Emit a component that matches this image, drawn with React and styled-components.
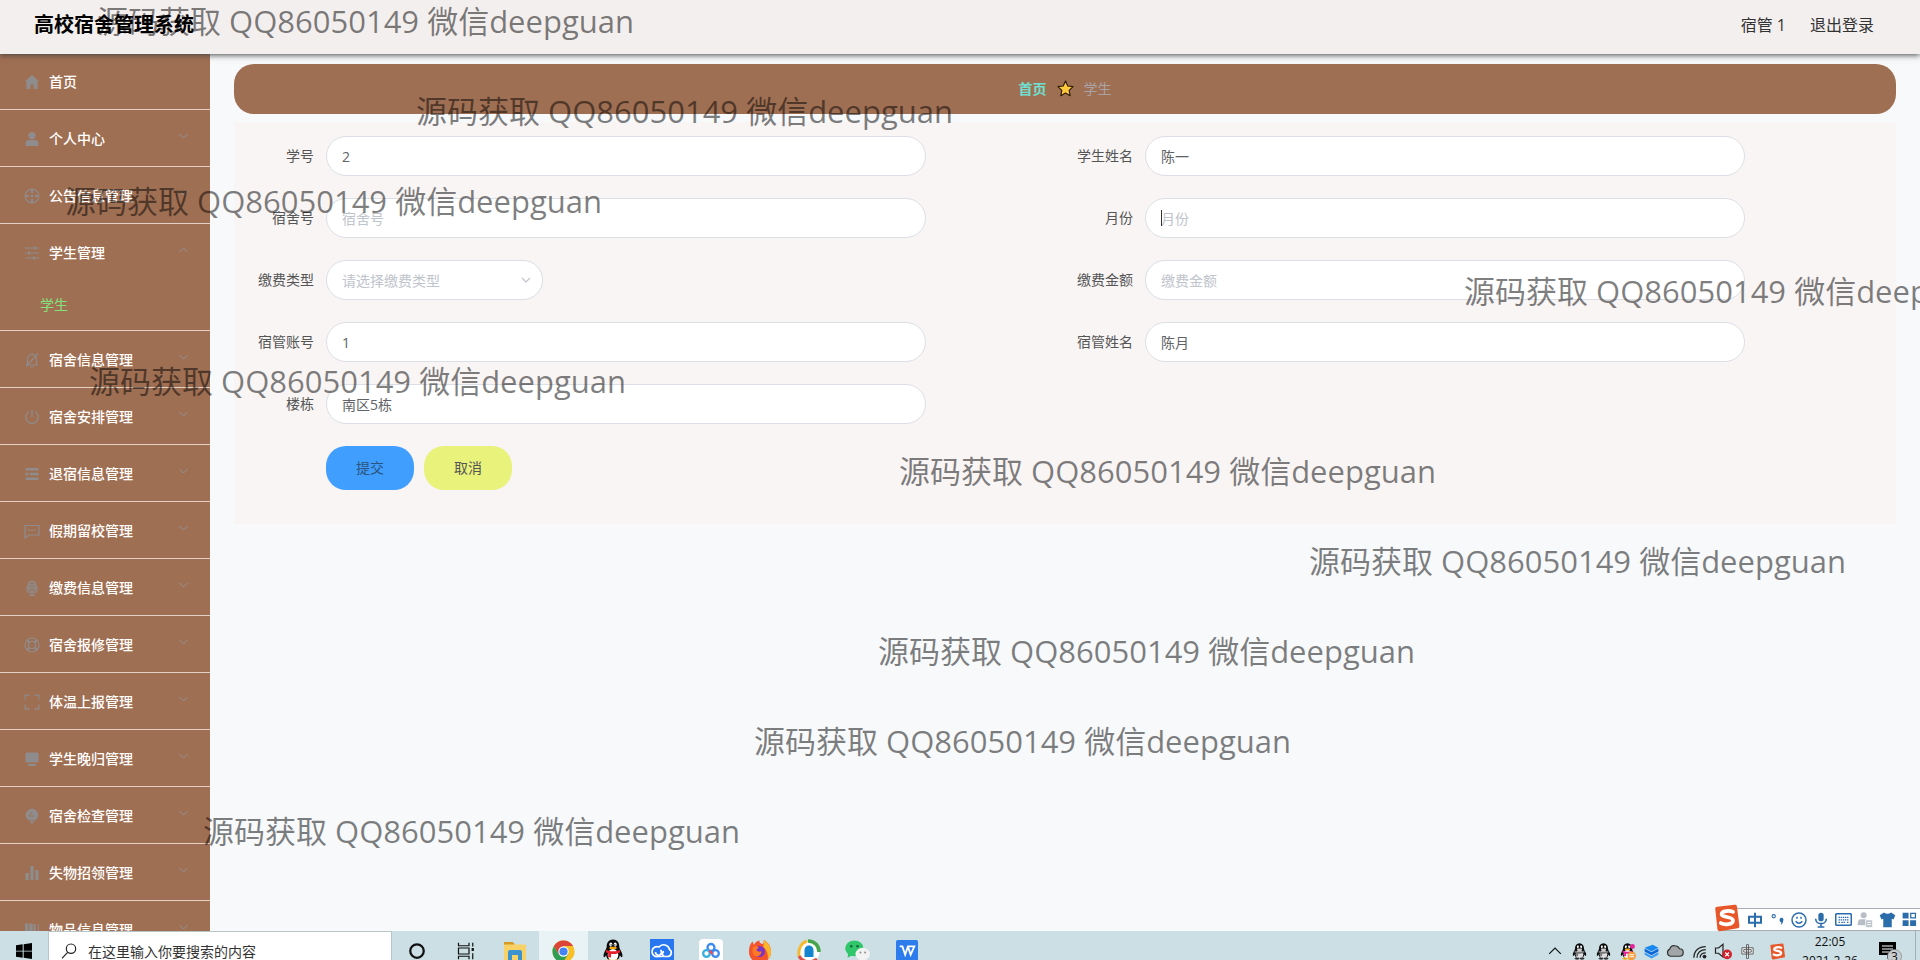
import React from "react";
import styled, { createGlobalStyle, css } from "styled-components";

const GlobalStyle = createGlobalStyle`
  *, *::before, *::after { box-sizing: border-box; }
  body {
    margin: 0;
    font-family: "Open Sans", "Noto Sans CJK SC", sans-serif;
    font-size: 14px;
    color: #606266;
    background: #f7f9fb;
  }
  ul { list-style: none; margin: 0; padding: 0; }
  button, input, select { font: inherit; color: inherit; }
  a { text-decoration: none; color: inherit; }
`;

const Screen = styled.div`
  position: relative;
  display: flex;
  flex-direction: column;
  height: 100vh;
  overflow: hidden;
`;

const Header = styled.header`
  position: relative;
  z-index: 2;
  flex: none;
  display: flex;
  align-items: center;
  justify-content: space-between;
  height: 54px;
  padding: 0 46px 4px 34px;
  background: #f4efef;
  box-shadow: 0 1px 6px #444;
`;

const SiteTitle = styled.h1`
  margin: 0;
  font-size: 20px;
  line-height: 28px;
  color: #000;
`;

const HeaderActions = styled.div`
  display: flex;
  gap: 24px;
  font-size: 16px;
  line-height: 24px;
  color: #333;
`;

const PlainButton = styled.button`
  padding: 0;
  border: 0;
  background: none;
  cursor: pointer;
`;

const Body = styled.div`
  flex: 1;
  min-height: 0;
  display: flex;
`;

const Sidebar = styled.nav`
  flex: none;
  width: 210px;
  margin-top: -1px;
  overflow: hidden;
  background: #9f6f53;
`;

const MenuItem = styled.li`
  border-bottom: 1px solid #e5d0c4;
`;

const MenuLink = styled.a`
  display: flex;
  align-items: center;
  height: 56px;
  padding: 2px 22px 0 24px;
  gap: 9px;
  font-weight: 500;
  color: #fff;
`;

const MenuText = styled.span`
  flex: 1;
  line-height: 20px;
`;

const MenuIcon = styled.svg`
  flex: none;
  width: 16px;
  height: 16px;
  color: #8f8c8d;
`;

const Chevron = styled.svg`
  flex: none;
  width: 9px;
  height: 6px;
  margin-bottom: 6px;
  color: #909399;
`;

const SubLink = styled.a`
  display: flex;
  align-items: center;
  height: 50px;
  padding: 0 0 2px 40px;
  color: #83e27c;
`;

const Main = styled.main`
  flex: 1;
  min-width: 0;
  padding: 10px 24px;
`;

const Breadcrumb = styled.nav`
  display: flex;
  align-items: center;
  justify-content: center;
  gap: 10px;
  height: 50px;
  padding-bottom: 2px;
  border-radius: 20px;
  background: #9f6f53;
  color: #a9a3a5;
`;

const CrumbLink = styled.a`
  font-weight: 700;
  color: #6fe0d0;
`;

const Star = styled.svg`
  width: 17px;
  height: 17px;
`;

const FormCard = styled.form`
  display: grid;
  grid-template-columns: 1fr 1fr;
  row-gap: 22px;
  margin-top: 8px;
  padding: 14px 12px 34px;
  background: #f9f5f5;
`;

const Field = styled.div`
  display: flex;
  min-width: 0;
  ${(p) => p.$wide && css`grid-column: 1 / -1;`}
`;

const FieldLabel = styled.label`
  flex: none;
  width: 80px;
  padding-right: 12px;
  line-height: 40px;
  text-align: right;
  color: #555;
`;

const Control = styled.div`
  position: relative;
  flex: 0 1 ${(p) => (p.$narrow ? 217 : 600)}px;
  min-width: 0;
`;

const boxStyle = css`
  display: block;
  width: 100%;
  height: 40px;
  padding: 0 15px;
  border: 1px solid #dcdfe6;
  border-radius: 20px;
  outline: 0;
  background: #fff;
`;

const TextInput = styled.input`
  ${boxStyle}
  caret-color: transparent;
  &::placeholder { color: #c0c4cc; opacity: 1; }
`;

const Select = styled.select`
  ${boxStyle}
  appearance: none;
  color: #c0c4cc;
`;

const SelectArrow = styled.svg`
  position: absolute;
  right: 12px;
  top: 17px;
  width: 10px;
  height: 7px;
  color: #c0c4cc;
  pointer-events: none;
`;

const Caret = styled.span`
  position: absolute;
  left: 16px;
  top: 12px;
  width: 1px;
  height: 16px;
  background: #333;
`;

const FormButtons = styled.div`
  display: flex;
  gap: 10px;
  padding-left: 80px;
`;

const FormButton = styled.button`
  width: 88px;
  height: 44px;
  padding: 0 0 2px;
  border: 0;
  border-radius: 20px;
  background: ${(p) => (p.$primary ? "#409eff" : "#e9f27b")};
  color: ${(p) => (p.$primary ? "#2b5580" : "#555")};
  cursor: pointer;
`;

const WatermarkLayer = styled.div`
  position: absolute;
  inset: 0;
  z-index: 5;
  overflow: hidden;
  padding: 0;
  pointer-events: none;
`;

const Watermark = styled.div`
  height: 90px;
  padding-left: ${(p) => p.$indent}px;
  font-size: 31px;
  line-height: 42px;
  white-space: nowrap;
  color: rgba(0, 0, 0, 0.5);
`;

const Taskbar = styled.footer`
  position: relative;
  z-index: 6;
  flex: none;
  height: 29px;
  background: #cbdfe4;
`;

const TaskbarClip = styled.div`
  display: flex;
  justify-content: space-between;
  height: 100%;
  overflow: hidden;
`;

const TaskGroup = styled.div`
  display: flex;
  height: 40px;
`;

const StartButton = styled.button`
  display: grid;
  place-items: center;
  width: 48px;
  height: 40px;
  padding: 0;
  border: 0;
  background: none;
`;

const SearchBox = styled.label`
  display: flex;
  align-items: center;
  gap: 11px;
  width: 344px;
  height: 40px;
  padding-left: 12px;
  border: 1px solid #b9c4c8;
  background: #fff;
`;

const SearchInput = styled.input`
  flex: 1;
  min-width: 0;
  padding: 0;
  border: 0;
  outline: 0;
  background: none;
  &::placeholder { color: #333; opacity: 1; }
`;

const TaskButton = styled.button`
  display: grid;
  place-items: center;
  width: 49px;
  height: 40px;
  padding: 0;
  border: 0;
  background: ${(p) => (p.$active ? "#e9f2f4" : "none")};
`;

const Tray = styled.div`
  display: flex;
  align-items: center;
  height: 40px;
`;

const TrayButton = styled.button`
  display: grid;
  place-items: center;
  width: ${(p) => p.$width || 24}px;
  height: 40px;
  padding: 0;
  border: 0;
  background: none;
`;

const Clock = styled.div`
  width: 70px;
  font-size: 12px;
  line-height: 19px;
  text-align: center;
  color: #111;
`;

const DesktopEdge = styled.div`
  width: 5px;
  height: 40px;
  border-left: 1px solid #9fb0b5;
`;

const ImeBar = styled.div`
  position: absolute;
  right: 0;
  bottom: 29px;
  display: flex;
  align-items: center;
  height: 23px;
  padding-left: 24px;
  border: 1px solid #a9adb3;
  border-right: 0;
  background: #fff;
  color: #2b6cab;
`;

const ImeLogo = styled.svg`
  position: absolute;
  left: -8px;
  top: -6px;
  width: 30px;
  height: 30px;
`;

const ImeButton = styled(PlainButton)`
  display: grid;
  place-items: center;
  width: 22px;
  height: 22px;
  font-weight: 700;
  font-size: 14px;
  line-height: 22px;
`;

const line = { fill: "none", stroke: "currentColor", strokeWidth: 1.2 };

const icons = {
  home: <path fill="currentColor" d="M8 1 .8 7.6h1.7V15h4v-4.5h3V15h4V7.6h1.7z" />,
  user: <><circle cx="8" cy="4.6" r="3.6" fill="currentColor" /><path fill="currentColor" d="M1.5 15v-2.5C1.5 10 3.4 9 5.3 9h5.4c1.9 0 3.800 1 3.800 3.500V15z" /></>,
  film: <g {...line}><circle cx="8" cy="8" r="6.800" /><circle cx="8" cy="8" r=".8" /><path d="M8 1.500v3.500M8 11v3.500M1.500 8H5M11 8h3.500" strokeWidth="2" /></g>,
  sliders: <g {...line}><path d="M1 3h14M1 8h14M1 13h14M11 1v4M5 6v4M10 11v4" /></g>,
  bell: <g {...line}><path d="M2 13h12M3.500 13V7A4.500 4.500 0 0 1 8 2.500 4.500 4.500 0 0 1 12.500 7v6M8 1v1.500M6.500 15h3M14 1.500 2 14.500" /></g>,
  power: <g {...line}><path d="M5 2.500a6.300 6.300 0 1 0 6 0M8 1v7" /></g>,
  list: <path fill="currentColor" d="M1.500 2h13v2.400h-13zM1.500 6.800h3v2.400h-3zM6 6.800h8.500v2.400H6zM1.500 11.600h13V14h-13z" />,
  chat: <g {...line}><path d="M1 2.500h14v9.500H5l-4 3z" /><path d="M4.500 7.200h1.500M7.200 7.200h1.500M10 7.200h1.500" strokeWidth="1.600" /></g>,
  mic: <g {...line}><rect x="4.500" y="1" width="7" height="10.500" rx="3.500" fill="currentColor" fillOpacity=".4" /><path d="M3 6v3.500C3 12 5 13 8 13s5-1 5-3.500V6M8 13v2.500M5 15.300h6M5 5h6M5 8h6" /></g>,
  help: <g {...line}><circle cx="8" cy="8" r="7" /><circle cx="8" cy="8" r="3.500" /><path d="m3 3 2.500 2.500M13 3l-2.500 2.500M3 13l2.500-2.500M13 13l-2.500-2.500" strokeWidth="1.800" /></g>,
  full: <g {...line}><path d="M5.500 1.200H1.200v4.300M10.500 1.200h4.300v4.300M5.500 14.800H1.200v-4.300M10.500 14.800h4.300v-4.300" /></g>,
  screen: <path fill="currentColor" d="M3.200 1.500h9.600c1 0 1.700.7 1.700 1.700v6.600c0 1-.7 1.700-1.700 1.700H3.200c-1 0-1.700-.7-1.700-1.700V3.200c0-1 .7-1.700 1.700-1.700zM4 13h8v2H4z" />,
  bulb: <><path fill="currentColor" d="M8 .8a6.300 6.300 0 0 0-6.300 6.300c0 2.500 1.400 4.300 3.500 5.300h5.600c2.100-1 3.500-2.800 3.500-5.300A6.300 6.300 0 0 0 8 .8zM5.800 13.200h4.400L8.800 15.500H7.200z" /><path d="M8.200 3.500 5 8h5" fill="none" stroke="#9f6f53" strokeWidth=".9" /></>,
  bars: <path fill="currentColor" d="M1.500 8h3.200v7H1.500zM6.400 1h3.200v14H6.400zM11.300 5h3.200v10h-3.200z" />,
  books: <path fill="currentColor" d="M1 1.500h3.400V14H1zM5.200 1.500h3.400V14H5.200zM9.400 2h2.200v7.500l1.200-1.200 1.200 1.200V2h1V14H9.400z" />,
};

const menu = [
  { icon: "home", text: "首页", leaf: true },
  { icon: "user", text: "个人中心" },
  { icon: "film", text: "公告信息管理" },
  { icon: "sliders", text: "学生管理", children: ["学生"] },
  { icon: "bell", text: "宿舍信息管理" },
  { icon: "power", text: "宿舍安排管理" },
  { icon: "list", text: "退宿信息管理" },
  { icon: "chat", text: "假期留校管理" },
  { icon: "mic", text: "缴费信息管理" },
  { icon: "help", text: "宿舍报修管理" },
  { icon: "full", text: "体温上报管理" },
  { icon: "screen", text: "学生晚归管理" },
  { icon: "bulb", text: "宿舍检查管理" },
  { icon: "bars", text: "失物招领管理" },
  { icon: "books", text: "物品信息管理" },
];

const fields = [
  { id: "number", label: "学号", value: "2" },
  { id: "name", label: "学生姓名", value: "陈一" },
  { id: "dorm", label: "宿舍号" },
  { id: "month", label: "月份", focused: true },
  { id: "type", label: "缴费类型", select: "请选择缴费类型" },
  { id: "amount", label: "缴费金额" },
  { id: "keeper", label: "宿管账号", value: "1" },
  { id: "keeperName", label: "宿管姓名", value: "陈月" },
  { id: "building", label: "楼栋", value: "南区5栋", wide: true },
];

const watermarkIndents = [97, 416, 65, 1464, 89, 899, 1309, 878, 754, 203];

const Penguin = ({ size = 22, body = "#fff", scarf = "#e3202b", extra }) => (
  <svg width={size} height={size} viewBox="0 0 24 24" aria-hidden="true">
    <path d="M12 .5c-4 0-6.300 3-6.300 7 0 2-1 3-2.200 5.500-1.300 2.700-1.200 5-.4 5.200.7.100 1.400-1 2-2 .3 1.800 1 3.200 2.200 4.300h9.400c1.200-1.100 1.900-2.500 2.200-4.300.6 1 1.300 2.100 2 2 .8-.2.900-2.500-.4-5.200-1.200-2.500-2.200-3.500-2.200-5.500 0-4-2.300-7-6.300-7z" fill="#0b0b0d" />
    <ellipse cx="12" cy="16" rx="5.300" ry="6" fill={body} />
    <path d="M5.300 10.800c4 2 9.400 2 13.400 0l.6 2.400c-2 1.200-4 1.700-6.300 1.900H10v3.500l-2.800-.4v-4c-1-.3-1.800-.7-2.500-1.200z" fill={scarf} />
    <ellipse cx="9.800" cy="5.600" rx="1.500" ry="2.100" fill="#fff" />
    <ellipse cx="14.200" cy="5.600" rx="1.500" ry="2.100" fill="#fff" />
    <circle cx="10.200" cy="5.900" r=".7" /><circle cx="13.800" cy="5.900" r=".7" />
    <ellipse cx="12" cy="9" rx="3.800" ry="1.200" fill={body === "#fff" ? "#f5a800" : "#ccc"} />
    <ellipse cx="8.500" cy="22" rx="3.500" ry="1.600" fill={body === "#fff" ? "#f5a800" : "#333"} />
    <ellipse cx="15.500" cy="22" rx="3.500" ry="1.600" fill={body === "#fff" ? "#f5a800" : "#333"} />
    {extra}
  </svg>
);

const Sogou = () => (
  <g>
    <path d="M3.500 5.500C3.300 4 4 3.200 5.500 3L24 .8c1.500-.2 2.400.4 2.600 1.900l2.600 20.500c.2 1.500-.4 2.400-1.900 2.600L8.500 29c-1.500.2-2.400-.4-2.700-1.900z" fill="#e8572a" />
    <path d="M22.500 8.500c-3.500-1.700-12-1.600-12.300 2.300-.3 4 12.500 2.200 12.200 6.900-.3 4.400-8.700 5-13 2.700" fill="none" stroke="#fff" strokeWidth="4" strokeLinecap="round" />
  </g>
);

const Svg = ({ w = 24, h = w, box = "0 0 24 24", children }) => (
  <svg width={w} height={h} viewBox={box} aria-hidden="true">{children}</svg>
);

const tasks = [
  ["Cortana", <Svg w={18}><circle cx="12" cy="12" r="9" fill="none" stroke="#111" strokeWidth="3" /></Svg>],
  ["任务视图", <Svg w={18}><path d="M2 1v4h14V1M2 23v-4h14v4M2 8h14v8H2zM21 1v5M21 15v8" fill="none" stroke="#111" strokeWidth="1.600" /><path fill="#111" d="M19.500 8h3v4h-3z" /></Svg>],
  ["文件资源管理器", <Svg w={24}><path fill="#d49a24" d="M1 3h9l2 3H1z" /><path fill="#f8d267" d="M1 5.500h22V22H1z" /><path fill="#3b94cf" d="M5 13q0-2 2-2h10q2 0 2 2v10h-4v-7H9v7H5z" /></Svg>],
  ["Chrome", <Svg w={23}><circle cx="12" cy="12" r="11.500" fill="#f6c026" /><path fill="#dc4437" d="M2 6.300A11.500 11.500 0 0 1 22 6.300H12L7 15z" /><path fill="#2f9e55" d="M2 6.300A11.500 11.500 0 0 0 11.500 23.500L17 14.500 7 15z" /><circle cx="12" cy="12" r="5.400" fill="#fff" /><circle cx="12" cy="12" r="4.300" fill="#4384f3" /></Svg>, true],
  ["QQ", <Penguin size={24} />],
  ["云盘", <Svg w={24}><path fill="#2877f0" d="M0 0h24v24H0z" /><path d="M12.500 17.500H8A5 5 0 1 1 9 8a6 6 0 0 1 10.500 2.500A3.800 3.800 0 0 1 18 17.500h-3c-3 0-3.500-4-1-5M5.500 13a3 3 0 1 0 5-2" fill="none" stroke="#fff" strokeWidth="1.700" /></Svg>],
  ["百度网盘", <Svg w={24}><rect width="24" height="24" rx="4" fill="#fff" /><g fill="none" strokeWidth="2.300"><circle cx="12" cy="8.500" r="3.500" stroke="#3c8cf0" /><circle cx="7.500" cy="14.500" r="3.300" stroke="#36b1df" /><circle cx="16.500" cy="14.500" r="3.300" stroke="#3c8cf0" /><path d="M10.500 11.500 13.500 15" stroke="#e84b66" /></g></Svg>],
  ["Firefox", <Svg w={24}><path fill="#f3542c" d="M1 13C1 8 2 5 4.500 2.500L6 6c1-2.500 3-4 5.500-4.500C11 4 13 5 15 5c1-1 1-3 .5-4C20 3 23 7 23 13a11 11 0 0 1-22 0z" /><path fill="#fdb52b" d="M15.500 1c5 3 7.500 7 7.500 12 0 3-1 5-3 7 0-7-2-10-5-12 1-2 1-4 .5-7z" /><circle cx="11.500" cy="12.500" r="5.500" fill="#7b35c4" /><path fill="#fb7a28" d="M5 8c2-1 4-1 6 .5-1 1-2 1-2.500 2.500 1 2 4 2 5 1 0 4-3 6-6 5S4 12 5 8z" /></Svg>],
  ["浏览器", <Svg w={24}><circle cx="12" cy="13" r="10.500" fill="#fff" /><path d="M2 17C1 10 4 4 10 2" fill="none" stroke="#f5b92f" strokeWidth="3" /><path d="M11 2c7 0 11 5 11 11" fill="none" stroke="#47a44c" strokeWidth="3.500" /><path d="M2 17c3 6 11 8 18 3" fill="none" stroke="#e35048" strokeWidth="3" /><path fill="#1585cf" d="M12 6.500c3 0 4.500 2.500 4.500 5V18h-9v-6.500c0-2.500 1.500-5 4.500-5z" /></Svg>],
  ["微信", <Svg w={25}><ellipse cx="9" cy="9" rx="8.800" ry="7.500" fill="#2fc76a" /><path fill="#2fc76a" d="m3 14-.5 4L7 15.500z" /><circle cx="6" cy="7" r="1.200" fill="#15623a" /><circle cx="12" cy="7" r="1.200" fill="#15623a" /><ellipse cx="17" cy="14.500" rx="7" ry="6" fill="#f2f2f2" /><circle cx="14.800" cy="13" r=".9" fill="#888" /><circle cx="19.300" cy="13" r=".9" fill="#888" /></Svg>],
  ["WPS", <Svg w={22}><rect width="24" height="24" rx="2" fill="#2c7cec" /><path d="M4 7h3l3 9 3-9h7l-4 9-3-9" fill="none" stroke="#fff" strokeWidth="2" /></Svg>],
];

const tray = [
  ["显示隐藏的图标", <Svg w={14}><path d="m2 17 10-10 10 10" fill="none" stroke="#111" strokeWidth="2" /></Svg>],
  ["QQ 1", <Penguin size={17} body="#ddd" scarf="#777" />],
  ["QQ 2", <Penguin size={17} body="#ddd" scarf="#777" />],
  ["QQ 3", <Penguin size={17} scarf="#e4249b" extra={<><circle cx="19" cy="5" r="3.500" fill="#e4249b" /><circle cx="18" cy="18" r="6" fill="#f59a3c" /><path d="M14.500 16.500h7M14.500 19.500h7" stroke="#fff" strokeWidth="1.500" /></>} />],
  ["同步", <Svg w={15}><path d="M1 6 14 1l9 5-11 6z" fill="#1688f0" /><path d="m1 7 11 6 11-6v5l-11 6-11-6z" fill="#0b66d8" /><path d="m1 13 11 6 11-6v4l-11 6-11-6z" fill="#3c9bf5" /></Svg>],
  ["云", <Svg w={18}><path d="M6 19a5 5 0 0 1-1-9.500C6 6 9 4.500 12 5c3 0 5 2 6 4 3 0 5 2 5 5s-2 5-5 5z" fill="#a2a6a9" stroke="#333" strokeWidth="1.600" /></Svg>],
  ["网络", <Svg w={15}><g fill="none" stroke="#222" strokeWidth="2"><path d="M3 22C3 11 11 4 22 4M8 22c0-8 6-13 14-13M13 22c0-5 4-8 9-8" /></g><circle cx="20" cy="20" r="3" fill="#222" /></Svg>],
  ["音量", <Svg w={18}><path d="M2 8h4l6-5v17l-6-5H2z" fill="none" stroke="#222" strokeWidth="1.600" /><circle cx="17.500" cy="16.500" r="6.500" fill="#d2222d" /><path d="m15 14 5 5m0-5-5 5" stroke="#fff" strokeWidth="1.500" /></Svg>],
  ["输入法", <Svg w={15}><path d="M3 6h18v10H3zM6 9h12v4H6zM10.500 1h3v22h-3z" fill="#fff" stroke="#444" strokeWidth="1.300" /></Svg>],
];

const ime = [
  ["中英文", <Svg w={16}><path d="M3 7h18v9H3zM12 1v22" fill="none" stroke="currentColor" strokeWidth="3" /></Svg>],
  ["标点", <Svg w={13}><circle cx="5" cy="6" r="3" fill="none" stroke="currentColor" strokeWidth="2" /><path d="M16 13a3.500 3.500 0 1 1 6.500 1q0 6-5 8 2-2 1.500-5a3.500 3.500 0 0 1-3-4z" fill="currentColor" /></Svg>],
  ["表情", <Svg w={16}><g fill="none" stroke="currentColor" strokeWidth="2.200"><circle cx="12" cy="12" r="10.500" /><path d="M7 14q5 6 10 0M9 7v3M15 7v3" /></g></Svg>],
  ["语音", <Svg w={16}><rect x="8" y="1" width="8" height="13" rx="4" fill="currentColor" /><path d="M4 10c0 10 16 10 16 0M12 17v5M7 22.500h10" fill="none" stroke="currentColor" strokeWidth="2.400" /></Svg>],
  ["键盘", <Svg w={17}><rect x="1" y="4" width="22" height="16" rx="1.500" fill="none" stroke="currentColor" strokeWidth="2.200" /><path d="M5 9h14M5 12.500h14M5 16h2M9 16h6M17 16h2" stroke="currentColor" strokeWidth="2" strokeDasharray="2 1" /></Svg>],
  ["用户", <Svg w={16}><g fill="#b8bec6"><circle cx="10" cy="5" r="4.500" /><path d="M1 20c0-7 2-9 5-9h7v9z" /><path d="M13 12h10v11H13z" stroke="#fff" /></g><path d="M15 15.500h6M15 19h6" stroke="#fff" strokeWidth="1.500" /></Svg>],
  ["皮肤", <Svg w={17}><path d="M7 2q5 4 10 0l6 4-2.500 6L18 11v12H6V11l-2.500 1L1 6z" fill="currentColor" /></Svg>],
  ["工具箱", <Svg w={15}><path d="M1 1h9.500v9.500H1zM1 13h9.500v9.500H1zM13 13h9.500v9.500H13z" fill="currentColor" /><path d="M14 2h7.500v7.500H14z" fill="none" stroke="currentColor" strokeWidth="2" /></Svg>],
];

function Menu() {
  return (
    <Sidebar>
      <ul>
        {menu.map((m) => (
          <MenuItem key={m.text}>
            <MenuLink href="#">
              <MenuIcon viewBox="0 0 16 16" aria-hidden="true">{icons[m.icon]}</MenuIcon>
              <MenuText>{m.text}</MenuText>
              {!m.leaf && (
                <Chevron viewBox="0 0 9 6" aria-hidden="true">
                  <path d={m.children ? "M.5 5l4-4 4 4" : "M.5 1l4 4 4-4"} fill="none" stroke="currentColor" />
                </Chevron>
              )}
            </MenuLink>
            {m.children && m.children.map((c) => <SubLink key={c} href="#">{c}</SubLink>)}
          </MenuItem>
        ))}
      </ul>
    </Sidebar>
  );
}

function FormField({ id, label, value, select, focused, wide }) {
  return (
    <Field $wide={wide}>
      <FieldLabel htmlFor={id}>{label}</FieldLabel>
      <Control $narrow={!!select}>
        {select ? (
          <>
            <Select id={id}><option>{select}</option></Select>
            <SelectArrow viewBox="0 0 10 7" aria-hidden="true">
              <path d="m1 1 4 4 4-4" fill="none" stroke="currentColor" strokeWidth="1.200" />
            </SelectArrow>
          </>
        ) : (
          <TextInput id={id} defaultValue={value} placeholder={label} />
        )}
        {focused && <Caret />}
      </Control>
    </Field>
  );
}

export default function App() {
  return (
    <Screen>
      <GlobalStyle />
      <Header>
        <SiteTitle>高校宿舍管理系统</SiteTitle>
        <HeaderActions>
          <span>宿管 1</span>
          <PlainButton>退出登录</PlainButton>
        </HeaderActions>
      </Header>
      <Body>
        <Menu />
        <Main>
          <Breadcrumb aria-label="面包屑">
            <CrumbLink href="#">首页</CrumbLink>
            <Star viewBox="0 0 24 24" aria-hidden="true">
              <path d="m12 1.500 3.200 7 7.500.9-5.500 5.200 1.400 7.600L12 18.500l-6.600 3.700 1.400-7.600L1.300 9.400l7.500-.9z" fill="#ffc83d" stroke="#2a1c08" strokeWidth="1.600" strokeLinejoin="round" />
            </Star>
            <span>学生</span>
          </Breadcrumb>
          <FormCard onSubmit={(e) => e.preventDefault()}>
            {fields.map((f) => <FormField key={f.id} {...f} />)}
            <FormButtons>
              <FormButton $primary type="submit">提交</FormButton>
              <FormButton type="button">取消</FormButton>
            </FormButtons>
          </FormCard>
        </Main>
      </Body>
      <WatermarkLayer>
        {watermarkIndents.map((x) => (
          <Watermark key={x} $indent={x}>源码获取 QQ86050149 微信deepguan</Watermark>
        ))}
      </WatermarkLayer>
      <Taskbar>
        <TaskbarClip>
          <TaskGroup>
            <StartButton aria-label="开始">
              <Svg w={16}><path fill="#000" d="M0 3.500 10 2v9.500H0zM11.500 1.800 24 0v11.500H11.500zM0 12.800h10v9.400L0 20.800zM11.500 12.800H24V24l-12.500-1.700z" /></Svg>
            </StartButton>
            <SearchBox>
              <Svg w={16}><circle cx="15" cy="8.500" r="7" fill="none" stroke="#222" strokeWidth="1.800" /><path d="m10 14-8.500 9" stroke="#222" strokeWidth="1.800" /></Svg>
              <SearchInput aria-label="搜索" placeholder="在这里输入你要搜索的内容" />
            </SearchBox>
            {tasks.map(([name, icon, active]) => (
              <TaskButton key={name} aria-label={name} $active={active}>{icon}</TaskButton>
            ))}
          </TaskGroup>
          <Tray>
            {tray.map(([name, icon]) => <TrayButton key={name} aria-label={name}>{icon}</TrayButton>)}
            <TrayButton $width={36} aria-label="搜狗输入法">
              <Svg w={17} box="2 0 28 30"><Sogou /></Svg>
            </TrayButton>
            <Clock>
              <div>22:05</div>
              <div>2021-2-26</div>
            </Clock>
            <TrayButton $width={50} aria-label="通知">
              <Svg w={24}><path d="M1 3h17v13h-6l-3 4v-4H1z" fill="#000" /><path d="M4 7h11M4 10h11M4 13h7" stroke="#fff" strokeWidth="1.200" /><circle cx="16.500" cy="17.500" r="7" fill="#c7cdd0" stroke="#777" strokeWidth=".6" /><text x="16.500" y="22" fontSize="12" textAnchor="middle" fill="#111">3</text></Svg>
            </TrayButton>
            <DesktopEdge />
          </Tray>
        </TaskbarClip>
        <ImeBar>
          <ImeLogo viewBox="0 0 32 30" aria-hidden="true"><Sogou /></ImeLogo>
          {ime.map(([name, icon]) => <ImeButton key={name} aria-label={name}>{icon}</ImeButton>)}
        </ImeBar>
      </Taskbar>
    </Screen>
  );
}
